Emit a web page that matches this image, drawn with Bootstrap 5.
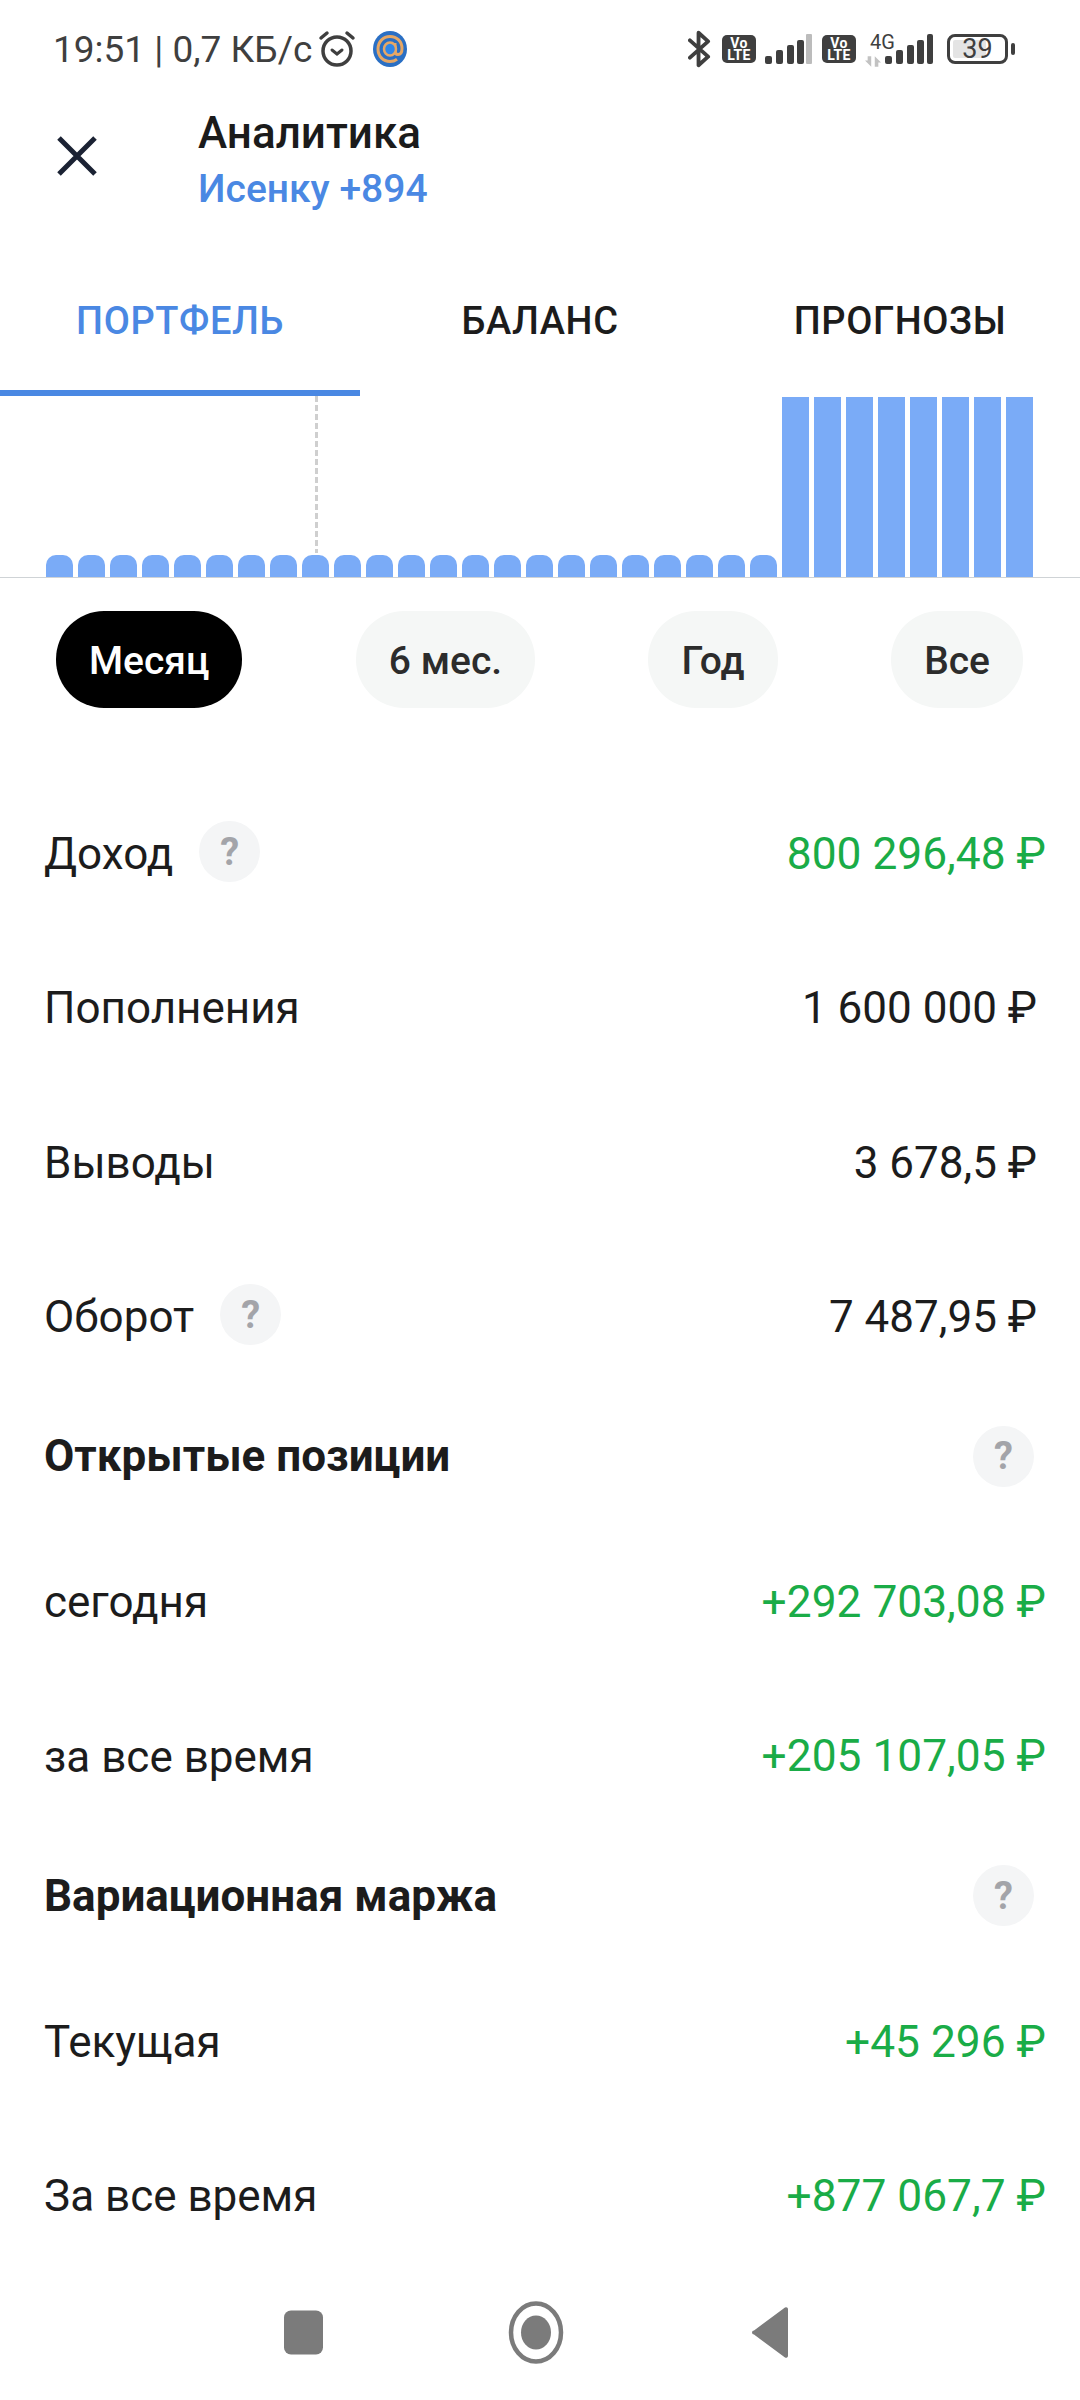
<!doctype html>
<html lang="ru"><head><meta charset="utf-8"><title>Аналитика</title>
<link rel="stylesheet" href="https://cdn.jsdelivr.net/npm/bootstrap@5.3.0/dist/css/bootstrap.min.css">
<style>
html,body{background:#fff}
body{font-family:Roboto,"Noto Sans",sans-serif;color:#1c1c1c;width:1080px;height:2400px;overflow:hidden}
.sbar{height:96px;padding:2px 65px 0 53px;color:#3f3f3f}
.sbar-time{font-size:37px;line-height:1}
.vo{width:34px;height:28px;background:#3f3f3f;border-radius:5px;color:#fff;font-size:14px;font-weight:700;line-height:12px;text-align:center;padding-top:2px;letter-spacing:.3px}
.gap9{margin-left:9px}.gap11{margin-left:11px}.gap14{margin-left:14px}.gap3{margin-left:3px}.gap5{margin-left:5px}
.batt-wrap{width:61px;height:30px;border:3.5px solid #3f3f3f;border-radius:8px;padding:3px}
.batt-fill{width:33px;height:100%;background:#e4e4e4;border-radius:2px}
.batt-num{font-size:27px;line-height:1;color:#3f3f3f;left:0;right:0;top:0;bottom:0;display:flex;align-items:center;justify-content:center}
.g4{font-size:20px;line-height:1;color:#3f3f3f;margin-left:5px;white-space:nowrap}
.g4-wrap{width:20px}
.head{height:130px;padding-left:57px}
.head-close{width:141px;margin-top:-10px}
.head-title{font-size:44px;font-weight:500;line-height:56px;color:#1b1b1b}
.head-sub{font-size:39px;font-weight:500;line-height:56px;color:#4a88e3}
.tabs{height:164px;padding-top:24px}
.tab-item{width:360px;height:140px;padding-top:2px;font-size:38px;font-weight:500;color:#1c1c1c;line-height:1;display:flex;align-items:center;justify-content:center;letter-spacing:.6px}
.tab-on{color:#4a88e3}
.tab-ind{width:360px;height:6px;background:#4a88e3}
.chart{height:182px;padding-left:46px;border-bottom:1.500px solid #cfd3d6;gap:5px}
.barx{width:27px;background:#7aabf7}
.bar-lo{height:22px;border-radius:10px 10px 0 0}
.bar-hi{height:180.500px}
.vline{left:315px;top:0;width:3px;height:157px;background:repeating-linear-gradient(to bottom,#cfcfcf 0 6px,transparent 6px 9px)}
.pills{padding:33px 57px 0 56px;height:130px}
.pillx{height:97px;border-radius:48px;background:#f5f7f6;color:#2c2c2c;font-size:39px;font-weight:500;padding:4px 33px 0;display:flex;align-items:center;line-height:1;border:0}
.pill-on{background:#000;color:#fff}
.rows{margin-top:69px;padding:0 34px 0 44px}
.rowx{height:154.3px;font-size:44px}
.rowh{height:124px;font-size:44px;font-weight:700}
.rowh-gap{margin-bottom:7px}
.amt{margin-right:9px}
.up{color:#1aac47;margin-right:0;font-size:44.300px}
.helpx{width:61px;height:61px;border-radius:50%;background:#f4f5f6;color:#a3a4a9;font-size:38px;font-weight:700;line-height:1;display:flex;align-items:center;justify-content:center;margin-left:26px;margin-top:-5px}
.rowh .helpx{margin:0 12px 0 0}
.navb{height:126px}
</style></head><body>
<div class="sbar d-flex justify-content-between align-items-center">
 <div class="d-flex align-items-center">
  <span class="sbar-time">19:51 | 0,7 КБ/с</span>
  <svg class="gap5" width="40" height="40" viewBox="0 0 40 40" fill="none" stroke="#3f3f3f"><circle cx="20" cy="22" r="14" stroke-width="3.5"/><path d="M4 9 10 4M36 9 30 4" stroke-width="3.5" stroke-linecap="round"/><path d="M15 21l5 4 5-4" stroke-width="3" stroke-linecap="round"/></svg>
  <svg class="ms-3" width="34" height="36" viewBox="0 0 34 36" fill="none"><ellipse cx="17" cy="18" rx="17" ry="18" fill="#2a6fc4"/><path d="M17 5.500C10 5.500 5 11 5 18s5 12.500 12 12.500c2.500 0 5-.8 7-2.300" stroke="#e6a765" stroke-width="3"/><path d="M17 5.500c7 0 12 5 12 12 0 3.500-1.500 6-4 6-2 0-3-1.500-3-3.500V12" stroke="#e6a765" stroke-width="3"/><ellipse cx="17" cy="18" rx="6" ry="6.500" stroke="#e6a765" stroke-width="2.500" fill="#2f86e8"/></svg>
 </div>
 <div class="d-flex align-items-center">
  <svg width="23" height="38" viewBox="0 0 24 38" fill="none" stroke="#3f3f3f" stroke-width="4" stroke-linejoin="round" stroke-linecap="round"><path d="M2 10 21 27 11 36V2l10 9L2 28"/></svg>
  <div class="vo gap11">Vo<br>LTE</div>
  <svg class="gap9" width="48" height="30" viewBox="0 0 48 30"><g fill="#3f3f3f"><rect x="0" y="22" width="7" height="8" rx="2"/><rect x="11" y="16" width="7" height="14" rx="2"/><rect x="22" y="11" width="7" height="19" rx="2"/><rect x="32" y="6" width="7" height="24" rx="2"/></g><rect x="41" y="0" width="6" height="30" rx="1" fill="#bcbcbc"/></svg>
  <div class="vo gap9">Vo<br>LTE</div>
  <div class="g4-wrap gap9 d-flex flex-column align-items-start">
   <span class="g4">4G</span>
   <svg width="16" height="11" viewBox="0 0 18 12" class="mt-1" fill="#c2c2c2"><path d="M0 5h3V0h4v12zM18 7h-3v5h-4V0z"/></svg>
  </div>
  <svg width="48" height="30" viewBox="0 0 48 30"><g fill="#3f3f3f"><rect x="0" y="22" width="7" height="8" rx="2"/><rect x="11" y="16" width="7" height="14" rx="2"/><rect x="22" y="11" width="7" height="19" rx="2"/><rect x="32" y="6" width="7" height="24" rx="2"/><rect x="42" y="0" width="6" height="30" rx="2"/></g></svg>
  <div class="position-relative batt-wrap gap14"><div class="batt-fill"></div><div class="position-absolute batt-num">39</div></div>
  <svg width="4" height="12" viewBox="0 0 4 12" class="gap3"><rect width="4" height="12" rx="2" fill="#3f3f3f"/></svg>
 </div>
</div>
<div class="head d-flex align-items-center">
 <div class="head-close flex-shrink-0"><svg width="40" height="40" viewBox="0 0 40 40" stroke="#1b2233" stroke-width="5"><path d="M2 2 38 38M38 2 2 38"/></svg></div>
 <div><div class="head-title">Аналитика</div><div class="head-sub">Исенку +894</div></div>
</div>
<div class="tabs">
 <div class="d-flex">
  <div class="tab-item tab-on">ПОРТФЕЛЬ</div><div class="tab-item">БАЛАНС</div><div class="tab-item">ПРОГНОЗЫ</div>
 </div>
</div>
<div class="tab-ind"></div>
<div class="chart d-flex align-items-end position-relative" id="chart"><div class="vline position-absolute"></div></div>
<div class="pills d-flex justify-content-between align-items-start">
 <button class="pillx pill-on">Месяц</button><button class="pillx">6 мес.</button><button class="pillx">Год</button><button class="pillx">Все</button>
</div>
<div class="rows">
 <div class="rowx d-flex justify-content-between align-items-center"><div class="d-flex align-items-center">Доход<span class="helpx">?</span></div><div class="up">800 296,48 ₽</div></div>
 <div class="rowx d-flex justify-content-between align-items-center"><div>Пополнения</div><div class="amt">1 600 000 ₽</div></div>
 <div class="rowx d-flex justify-content-between align-items-center"><div>Выводы</div><div class="amt">3 678,5 ₽</div></div>
 <div class="rowx d-flex justify-content-between align-items-center"><div class="d-flex align-items-center">Оборот<span class="helpx">?</span></div><div class="amt">7 487,95 ₽</div></div>
 <div class="rowh rowh-gap d-flex justify-content-between align-items-center"><div>Открытые позиции</div><span class="helpx">?</span></div>
 <div class="rowx d-flex justify-content-between align-items-center"><div>сегодня</div><div class="up">+292 703,08 ₽</div></div>
 <div class="rowx d-flex justify-content-between align-items-center"><div>за все время</div><div class="up">+205 107,05 ₽</div></div>
 <div class="rowh rowh-gap d-flex justify-content-between align-items-center"><div>Вариационная маржа</div><span class="helpx">?</span></div>
 <div class="rowx d-flex justify-content-between align-items-center"><div>Текущая</div><div class="up">+45 296 ₽</div></div>
 <div class="rowx d-flex justify-content-between align-items-center"><div>За все время</div><div class="up">+877 067,7 ₽</div></div>
</div>
<div class="navb">
 <svg width="1080" height="126" viewBox="0 8.500 1080 126" fill="#7b7b7b" class="d-block"><rect x="284" y="46" width="39" height="44" rx="7"/><ellipse cx="536" cy="68" rx="25" ry="29" fill="none" stroke="#7b7b7b" stroke-width="4.500"/><ellipse cx="536" cy="68" rx="15" ry="17"/><path d="M785 43 754 66a2 2 0 0 0 0 4l31 23a2 2 0 0 0 3-2V45a2 2 0 0 0-3-2z"/></svg>
</div>
<script>
var c=document.getElementById('chart');
for(var i=0;i<31;i++){var d=document.createElement('div');d.className='barx '+(i<23?'bar-lo':'bar-hi');c.appendChild(d);}
</script>
<script src="https://cdn.jsdelivr.net/npm/bootstrap@5.3.0/dist/js/bootstrap.bundle.min.js"></script>
</body></html>
